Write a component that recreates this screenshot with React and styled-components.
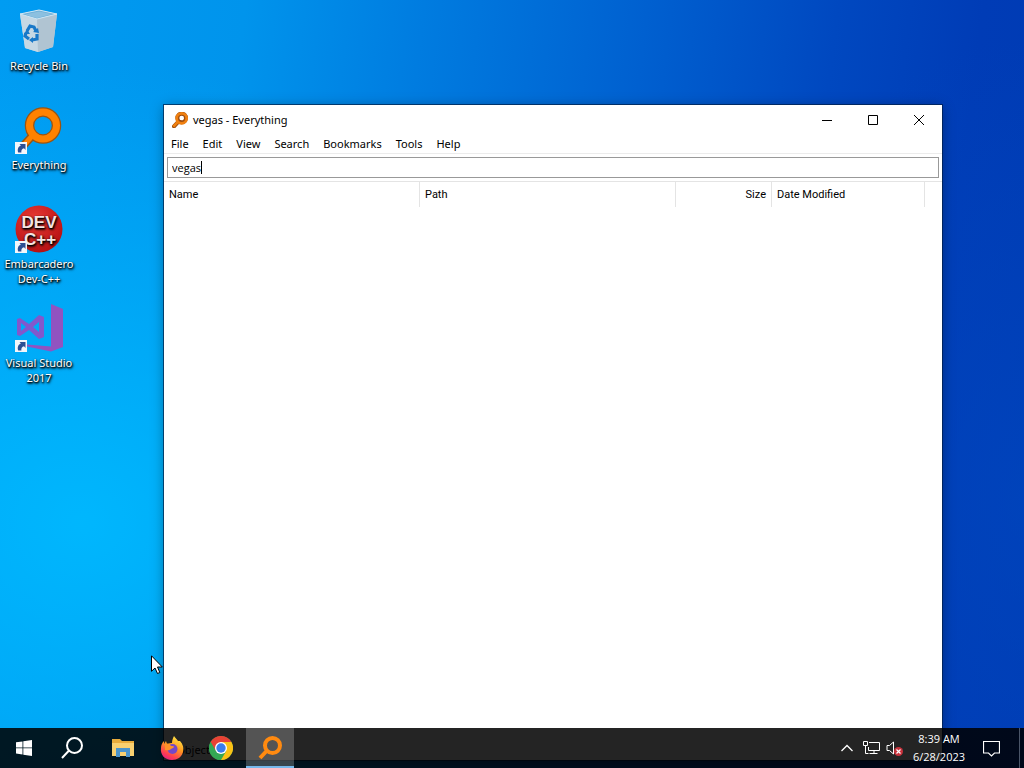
import React from 'react';
import styled, { createGlobalStyle, css } from 'styled-components';

const GlobalStyle = createGlobalStyle`
  * { box-sizing: border-box; }
  body { margin: 0; overflow: hidden; font: 11px/15px "Noto Sans", "Open Sans", sans-serif; color: #000; }
  button, input { font: inherit; color: inherit; border: 0; background: none; padding: 0; margin: 0; }
  ul { list-style: none; margin: 0; padding: 0; }
  svg { display: block; }
`;

const Desktop = styled.main`
  position: relative;
  height: 100vh;
  overflow: hidden;
  background:
    radial-gradient(ellipse 50% 60% at 8% 68%, rgba(0, 186, 255, 0.9), rgba(0, 180, 255, 0) 100%),
    radial-gradient(ellipse 30% 60% at 100% 65%, rgba(0, 72, 192, 0.6), rgba(0, 72, 192, 0) 100%),
    linear-gradient(97deg, #009cf2 0%, #0094ec 22%, #007ce0 38%, #0060d0 58%, #0048c0 75%, #003cb6 88%, #003ab2 100%);
`;

const Shortcuts = styled.ul`
  width: 78px;
  padding-top: 7px;
`;

const ShortcutItem = styled.li`
  height: 99px;
`;

const ShortcutButton = styled.button`
  width: 100%;
  display: flex;
  flex-direction: column;
  align-items: center;
  gap: 3px;
  color: #fff;
  text-shadow: 1px 1px 2px #000, 0 1px 2px #000, 1px 2px 3px rgba(0, 0, 0, 0.6);
`;

const Window = styled.section`
  position: absolute;
  top: 105px;
  left: 164px;
  right: 82px;
  bottom: 8px;
  display: flex;
  flex-direction: column;
  background: #fff;
  box-shadow: 0 0 0 1px rgba(0, 30, 70, 0.7), 0 2px 12px rgba(0, 0, 0, 0.35);
`;

const TitleBar = styled.header`
  height: 29px;
  flex: none;
  display: flex;
  align-items: center;
  padding-left: 8px;
  gap: 5px;
`;

const Title = styled.h1`
  flex: 1;
  margin: 0;
  font-size: 11px;
  font-weight: 400;
`;

const CaptionButtons = styled.div`
  display: flex;
  align-self: stretch;
`;

const CaptionButton = styled.button`
  width: 46px;
  display: grid;
  place-items: center;
`;

const MenuBar = styled.nav`
  height: 20px;
  flex: none;
  display: flex;
  border-bottom: 1px solid #ececec;
`;

const MenuItem = styled.button`
  padding: 0 7px;
`;

const SearchRow = styled.div`
  flex: none;
  padding: 3px;
  border-bottom: 1px solid #e4e4e4;
`;

const SearchBox = styled.label`
  height: 21px;
  display: flex;
  align-items: center;
  padding: 0 4px;
  border: 1px solid #999;
  font-family: "Open Sans", "Noto Sans", sans-serif;
`;

const SearchInput = styled.input`
  field-sizing: content;
  outline: 0;
  caret-color: transparent;
`;

const Caret = styled.span`
  width: 1px;
  height: 13px;
  background: #000;
`;

const Results = styled.table`
  width: 100%;
  table-layout: fixed;
  border-collapse: separate;
  border-spacing: 0;
`;

const Column = styled.col`
  width: ${(p) => p.$width};
`;

const HeaderCell = styled.th`
  height: 25px;
  padding: 0 5px;
  text-align: ${(p) => p.$align || 'left'};
  font: 11px/15px Roboto, "Open Sans", sans-serif;
  border-right: ${(p) => (p.$last ? '0' : '1px solid #e4e4e4')};
`;

const StatusBar = styled.footer`
  margin-top: auto;
  padding: 0 5px 3px;
`;

const Taskbar = styled.footer`
  position: absolute;
  left: 0;
  right: 0;
  bottom: 0;
  height: 40px;
  display: flex;
  background: rgba(0, 0, 0, 0.86);
  color: #fff;
`;

const SystemButtons = styled.div`
  display: flex;
`;

const PinnedApps = styled.div`
  display: flex;
  gap: 1px;
  margin-left: 3px;
`;

const TaskButton = styled.button`
  width: 48px;
  display: grid;
  place-items: center;
  ${(p) => p.$active && css`
    background: rgba(255, 255, 255, 0.22);
    box-shadow: inset 0 -2px #76b9ed;
  `}
`;

const Tray = styled.div`
  display: flex;
  margin-left: auto;
`;

const TrayButton = styled.button`
  width: 24px;
  display: grid;
  place-items: center;
`;

const Clock = styled.button`
  width: 64px;
  font-family: "Open Sans", "Noto Sans", sans-serif;
  line-height: 18px;
  text-align: center;
`;

const NoticeButton = styled.button`
  width: 40px;
  display: grid;
  place-items: center;
`;

const ShowDesktop = styled.button`
  width: 5px;
  margin-left: 8px;
  border-left: 1px solid #4a5568;
`;

const Pointer = styled.svg`
  position: absolute;
  left: 151px;
  top: 655px;
  pointer-events: none;
`;

const ShortcutArrow = () => (
  <g>
    <rect x="0" y="36" width="12" height="12" fill="#f4f6fa" />
    <path d="M3.200 46.500c-1.200-3.500.3-6.300 2.800-7L4.500 38h6v6L9 42.300c-2 .4-3 2-2.600 4.200z" fill="#2c4f94" />
  </g>
);

const RecycleIcon = () => (
  <svg width="48" height="48" viewBox="0 0 48 48" aria-hidden="true">
    <path d="M5 7l19-4 18 4-4 33-15 5-13-4z" fill="#bdd3e2" />
    <path d="M5 7l17 5 1 33-13-4z" fill="#c6d8e4" />
    <path d="M22 12l20-5-4 33-15 5z" fill="#b0c4d2" />
    <path d="M5 7l19-4 18 4-20 5z" fill="#6fb0d8" stroke="#cfe6f4" />
    <path d="M10 7.500l14-3 13 2.500-15 4z" fill="#8cc0e0" />
    <g fill="none" stroke="#1878c8" strokeWidth="3.200">
      <path d="M12 24l3-5 4 1 2 4" />
      <path d="M22 27l0 5-5 1" />
      <path d="M14 32l-4-3 1-3" />
    </g>
    <path d="M18 25l6 1-1-5zM18 30l-4 3 4 3zM9 27l3-5 3 5z" fill="#1878c8" />
  </svg>
);

const EverythingDesktopIcon = () => (
  <svg width="48" height="48" viewBox="0 0 48 48" aria-hidden="true">
    <path d="M18 29L8 40" stroke="#9c5410" strokeWidth="8" strokeLinecap="round" />
    <circle cx="28" cy="19.500" r="13.500" fill="none" stroke="#9c5410" strokeWidth="9.500" />
    <path d="M19 28L8 40" stroke="#ff8200" strokeWidth="5" strokeLinecap="round" />
    <circle cx="28" cy="19.500" r="13.500" fill="none" stroke="#ff8200" strokeWidth="7" />
    <ShortcutArrow />
  </svg>
);

const DevIcon = () => (
  <svg width="48" height="48" viewBox="0 0 48 48" aria-hidden="true">
    <defs>
      <radialGradient id="devRed" cx="40%" cy="30%" r="75%">
        <stop offset="0" stopColor="#e83a34" />
        <stop offset="1" stopColor="#b40e12" />
      </radialGradient>
    </defs>
    <circle cx="24" cy="24" r="23.500" fill="url(#devRed)" />
    <g fill="#f6e4e2" fontFamily="Liberation Sans, sans-serif" fontWeight="700" fontSize="17" textAnchor="middle">
      <text x="24" y="23">DEV</text>
      <text x="25" y="40">C++</text>
    </g>
    <ShortcutArrow />
  </svg>
);

const VisualStudioIcon = () => (
  <svg width="48" height="48" viewBox="0 0 48 48" aria-hidden="true">
    <path d="M36 0l12 5v38l-12 4.500-24-5v-2l24 2z" fill="#9153c0" />
    <path d="M2 15l3-1 9 6 10-9 5 2v20l-5 2-10-9-9 6-3-1zM6 19v8l5-4zM18 23l6 5V18z" fill="#8258cc" fillRule="evenodd" />
    <ShortcutArrow />
  </svg>
);

const SearchGlyph = ({ size, color, outline, weight }) => (
  <svg width={size} height={size} viewBox="0 0 24 24" fill="none" aria-hidden="true">
    {outline && <path d="M10 14L3 21.500M21 9a6.500 6.500 0 1 1-13 0 6.500 6.500 0 0 1 13 0z" stroke={outline} strokeWidth={weight + 2} strokeLinecap="round" />}
    <path d="M9.500 14L2 22M22 9.500a7.500 7.500 0 1 1-15 0 7.500 7.500 0 0 1 15 0z" stroke={color} strokeWidth={weight} />
  </svg>
);

const WindowsIcon = () => (
  <svg width="16" height="16" viewBox="0 0 16 16" fill="#fff" aria-hidden="true">
    <path d="M0 2.300L6.500 1.400v6.100H0zM7.300 1.300L16 0v7.500H7.300zM0 8.300h6.500v6.200L0 13.600zM7.300 8.300H16V16l-8.700-1.300z" />
  </svg>
);

const FolderIcon = () => (
  <svg width="22" height="20" viewBox="0 0 22 20" aria-hidden="true">
    <path d="M0 1h8l2 2h12v15H0z" fill="#e8ac3c" />
    <path d="M0 5h22v13H0z" fill="#f8d070" />
    <path d="M4 10h14v9h-4v-5H8v5H4z" fill="#4a94cc" />
  </svg>
);

const FirefoxIcon = () => (
  <svg width="24" height="24" viewBox="0 0 24 24" aria-hidden="true">
    <defs>
      <linearGradient id="fox" x1="0.800" y1="0" x2="0.300" y2="1">
        <stop offset="0" stopColor="#fff04a" />
        <stop offset="0.450" stopColor="#ff9a20" />
        <stop offset="0.800" stopColor="#ff4050" />
        <stop offset="1" stopColor="#e82080" />
      </linearGradient>
    </defs>
    <path d="M14 0c1 2 3 3 4 5l2 0c3 3 4 7 3 11-1 5-6 8-11 8C5 24 0 19 1 12c0-3 1-5 3-7v3l2-3 1 3c2-1 4-1 5-1 0-3 1-5 2-7z" fill="url(#fox)" />
    <circle cx="12.500" cy="13" r="5" fill="#7548c8" />
    <path d="M5 8c2-1 5 0 6 2 2 0 3 0 3 1s-2 1-3 2c-2 2-4 1-6 1z" fill="#ff9228" />
  </svg>
);

const ChromeIcon = () => (
  <svg width="24" height="24" viewBox="0 0 24 24" aria-hidden="true">
    <circle cx="12" cy="12" r="12" fill="#34a853" />
    <path d="M12 12L1.600 6A12 12 0 0 1 22.400 6z" fill="#e94235" />
    <path d="M12 6h10.400A12 12 0 0 1 12 24l5.200-9z" fill="#fbc116" />
    <path d="M1.600 6l5.200 9L12 12V6z" fill="#e94235" />
    <path d="M1.600 6l5.200 9 5.200 3v6A12 12 0 0 1 1.600 6z" fill="#34a853" />
    <circle cx="12" cy="12" r="6" fill="#fff" />
    <circle cx="12" cy="12" r="4.700" fill="#3b7ded" />
  </svg>
);

const shortcuts = [
  { label: 'Recycle Bin', Icon: RecycleIcon },
  { label: 'Everything', Icon: EverythingDesktopIcon },
  { label: 'Embarcadero Dev-C++', Icon: DevIcon },
  { label: 'Visual Studio 2017', Icon: VisualStudioIcon },
];

const menus = ['File', 'Edit', 'View', 'Search', 'Bookmarks', 'Tools', 'Help'];

export default function App() {
  return (
    <>
      <GlobalStyle />
      <Desktop>
        <Shortcuts>
          {shortcuts.map(({ label, Icon }) => (
            <ShortcutItem key={label}>
              <ShortcutButton type="button"><Icon />{label}</ShortcutButton>
            </ShortcutItem>
          ))}
        </Shortcuts>

        <Window>
          <TitleBar>
            <SearchGlyph size={16} color="#f08010" outline="#9c4c10" weight={4} />
            <Title>vegas - Everything</Title>
            <CaptionButtons>
              <CaptionButton type="button" aria-label="Minimize">
                <svg width="10" height="10" viewBox="0 0 10 10"><path d="M0 5.500h10" stroke="#000" /></svg>
              </CaptionButton>
              <CaptionButton type="button" aria-label="Maximize">
                <svg width="10" height="10" viewBox="0 0 10 10"><path d="M.5.500h9v9h-9z" fill="none" stroke="#000" /></svg>
              </CaptionButton>
              <CaptionButton type="button" aria-label="Close">
                <svg width="10" height="10" viewBox="0 0 10 10"><path d="M0 0l10 10M10 0L0 10" stroke="#000" /></svg>
              </CaptionButton>
            </CaptionButtons>
          </TitleBar>
          <MenuBar>
            {menus.map((name) => <MenuItem type="button" key={name}>{name}</MenuItem>)}
          </MenuBar>
          <SearchRow>
            <SearchBox>
              <SearchInput aria-label="Search" defaultValue="vegas" />
              <Caret />
            </SearchBox>
          </SearchRow>
          <Results>
            <colgroup>
              <Column $width="256px" />
              <Column $width="256px" />
              <Column $width="96px" />
              <Column $width="153px" />
              <Column $width="auto" />
            </colgroup>
            <thead>
              <tr>
                <HeaderCell scope="col">Name</HeaderCell>
                <HeaderCell scope="col">Path</HeaderCell>
                <HeaderCell scope="col" $align="right">Size</HeaderCell>
                <HeaderCell scope="col">Date Modified</HeaderCell>
                <HeaderCell as="td" $last />
              </tr>
            </thead>
          </Results>
          <StatusBar>0 objects</StatusBar>
        </Window>

        <Taskbar>
          <SystemButtons>
            <TaskButton type="button" aria-label="Start"><WindowsIcon /></TaskButton>
            <TaskButton type="button" aria-label="Search"><SearchGlyph size={24} color="#fff" weight={2} /></TaskButton>
          </SystemButtons>
          <PinnedApps>
            <TaskButton type="button" aria-label="File Explorer"><FolderIcon /></TaskButton>
            <TaskButton type="button" aria-label="Firefox"><FirefoxIcon /></TaskButton>
            <TaskButton type="button" aria-label="Chrome"><ChromeIcon /></TaskButton>
            <TaskButton type="button" aria-label="Everything" $active><SearchGlyph size={24} color="#ff8a10" weight={4} /></TaskButton>
          </PinnedApps>
          <Tray>
            <TrayButton type="button" aria-label="Show hidden icons">
              <svg width="12" height="8" viewBox="0 0 12 8"><path d="M.5 7L6 1.500 11.500 7" fill="none" stroke="#fff" strokeWidth="1.300" /></svg>
            </TrayButton>
            <TrayButton type="button" aria-label="Network">
              <svg width="17" height="16" viewBox="0 0 17 16" fill="none" stroke="#fff"><path d="M6 2.500h10.500v8H5.500V7M.5 1.500h4v4h-4zM2.500 5.500v8h3M11 10.500v3M6.500 13.500h8" /></svg>
            </TrayButton>
            <TrayButton type="button" aria-label="Volume muted">
              <svg width="18" height="16" viewBox="0 0 18 16"><path d="M1 5.500h2.500L7.500 2v12L3.500 10.500H1z" fill="none" stroke="#fff" /><circle cx="12.500" cy="11.500" r="4.500" fill="#c8323c" /><path d="M10.500 9.500l4 4m0-4l-4 4" stroke="#fff" strokeWidth="1.200" /></svg>
            </TrayButton>
            <Clock type="button">8:39 AM<br />6/28/2023</Clock>
            <NoticeButton type="button" aria-label="Notifications">
              <svg width="17" height="17" viewBox="0 0 17 17"><path d="M.5 1.500h16v11.500h-5l-3 3-3-3h-5z" fill="none" stroke="#fff" strokeWidth="1.200" /></svg>
            </NoticeButton>
            <ShowDesktop type="button" aria-label="Show desktop" />
          </Tray>
        </Taskbar>

        <Pointer width="12" height="20" viewBox="0 0 12 20" aria-hidden="true">
          <path d="M.5.800v15.500L4 13l2.500 5.500 2.300-1L6.500 12h4.800z" fill="#fff" stroke="#000" />
        </Pointer>
      </Desktop>
    </>
  );
}
